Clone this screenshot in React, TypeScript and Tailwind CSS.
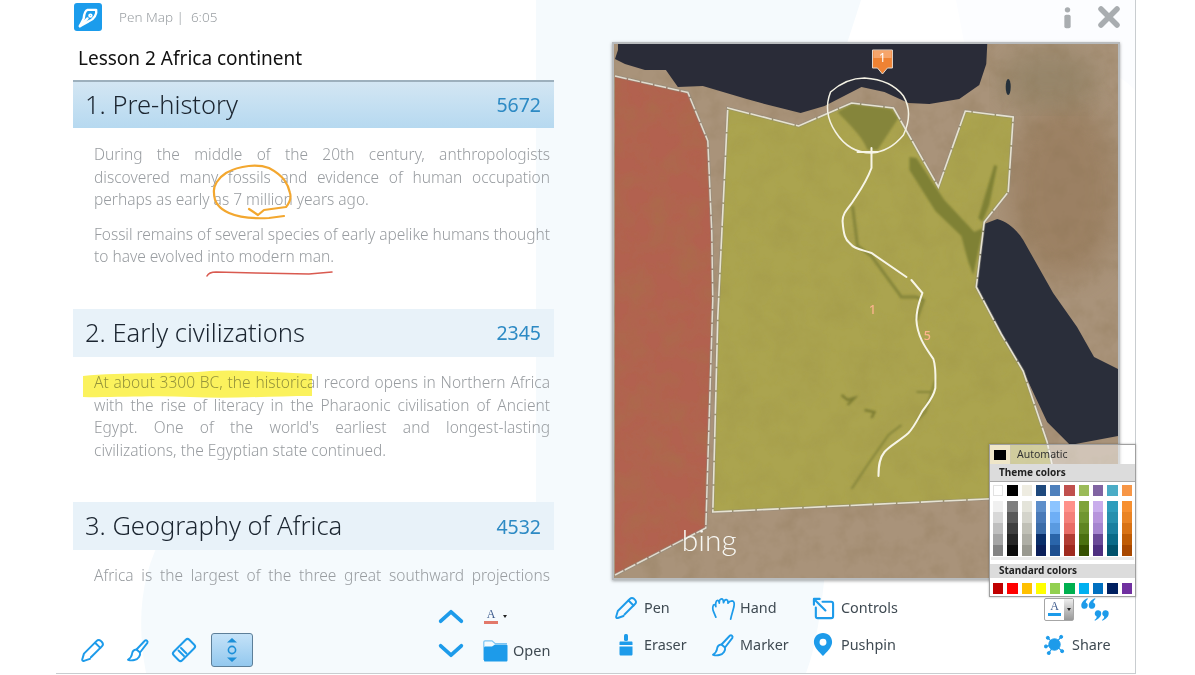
import React from "react";

const BLUE = "#1d9bea";

function Line({ children, last }: { children: React.ReactNode; last?: boolean }) {
  return <div className={last ? "h-[22.6px] leading-[22.6px] whitespace-nowrap" : "h-[22.6px] leading-[22.6px] whitespace-nowrap text-justify [text-align-last:justify]"}>{children}</div>;
}

function SectionHead({ title, num, active }: { title: string; num: string; active?: boolean }) {
  return (
    <div className={active ? "h-[48px] flex items-center justify-between pl-[12px] pr-[13px] border-t-[2px] border-[#9db0bd] bg-gradient-to-b from-[#d3e6f3] to-[#b6d9f0]" : "h-[48px] flex items-center justify-between pl-[12px] pr-[13px] bg-[#e8f2f9]"}>
      <span className="text-[25.5px] font-light text-[#1b2530] leading-[44px] mt-[-2px]">{title}</span>
      <span className="text-[19.5px] text-[#2d8ac4]">{num}</span>
    </div>
  );
}

function PenIcon({ className }: { className: string }) {
  return (
    <svg viewBox="0 0 24 24" className={className} fill="none" stroke={BLUE} strokeWidth="1.9" strokeLinecap="round" strokeLinejoin="round">
      <path d="M9.5 20 L3.8 22 C2.6 22.3 1.9 21.6 2.2 20.4 L3.8 15 L15.8 3 C17 1.8 18.6 1.6 20 2.8 L21 3.8 C22.3 5.2 22.2 6.8 21 8 L10.5 18.5" />
      <path d="M14.5 4.5 L19.5 9.5" />
    </svg>
  );
}

function BrushIcon({ className }: { className: string }) {
  return (
    <svg viewBox="0 0 24 24" className={className} fill="none" stroke={BLUE} strokeWidth="1.9" strokeLinecap="round" strokeLinejoin="round">
      <path d="M19 2.5 C20.3 1.6 22.2 3.2 21.4 4.8 L14 14.5 L10.5 11.5 Z" />
      <path d="M10.5 11.5 C7.5 11.8 6.2 14 6 16 C5.8 18.4 4.4 20 2 21.8 C6 23 11 22.2 13 19 C14.2 17 14.4 15.8 14 14.5" />
    </svg>
  );
}

function Tool({ icon, label, narrow }: { icon: React.ReactNode; label: string; narrow?: boolean }) {
  return (
    <div className="flex items-center h-[36.5px]">
      <div className={narrow ? "w-[29px] flex justify-start" : "w-[30px] flex justify-start"}>{icon}</div>
      <span className="text-[14.4px] text-[#3f4a52]">{label}</span>
    </div>
  );
}

const themeTop = ["bg-[#ffffff] border border-[#e2e2e2]", "bg-[#000000]", "bg-[#eeece1]", "bg-[#1f497d]", "bg-[#4f81bd]", "bg-[#c0504d]", "bg-[#9bbb59]", "bg-[#8064a2]", "bg-[#4bacc6]", "bg-[#f79646]"];
const themeCols = [
  ["bg-[#f0f0f0]", "bg-[#d8d8d8]", "bg-[#bfbfbf]", "bg-[#a5a5a5]", "bg-[#838383]"],
  ["bg-[#7f7f7f]", "bg-[#595959]", "bg-[#3f3f3f]", "bg-[#262626]", "bg-[#0c0c0c]"],
  ["bg-[#e4e4da]", "bg-[#d4d4cb]", "bg-[#c0c0b6]", "bg-[#aeaea5]", "bg-[#999990]"],
  ["bg-[#5e8fca]", "bg-[#4a7ab8]", "bg-[#3c6ca8]", "bg-[#0a2f6b]", "bg-[#0a1f5a]"],
  ["bg-[#8cc4ff]", "bg-[#6eaef5]", "bg-[#5a9ae0]", "bg-[#2a65aa]", "bg-[#1d4f90]"],
  ["bg-[#ff918a]", "bg-[#f4807a]", "bg-[#e86d66]", "bg-[#b23d33]", "bg-[#9f2a1e]"],
  ["bg-[#7fa33c]", "bg-[#6f9630]", "bg-[#5f8522]", "bg-[#4b7010]", "bg-[#355000]"],
  ["bg-[#c9adec]", "bg-[#b795dc]", "bg-[#a585cf]", "bg-[#6a4a98]", "bg-[#4e2f80]"],
  ["bg-[#2e9dbc]", "bg-[#2690ae]", "bg-[#1a7f9f]", "bg-[#0a6a88]", "bg-[#00526c]"],
  ["bg-[#f79030]", "bg-[#ea8424]", "bg-[#d87214]", "bg-[#bf5c05]", "bg-[#a84800]"],
];
const standard = ["bg-[#c00000]", "bg-[#ff0000]", "bg-[#ffc000]", "bg-[#ffff00]", "bg-[#92d050]", "bg-[#00b050]", "bg-[#00b0f0]", "bg-[#0070c0]", "bg-[#002060]", "bg-[#7030a0]"];

function ColorPopup() {
  return (
    <div className="absolute left-[933px] top-[444px] w-[147px] h-[153px] border border-[#a0a0a0] shadow-[0_0_2px_rgba(0,0,0,0.3)] flex flex-col z-20">
      <div className="h-[19px] flex items-center bg-white/45 shrink-0">
        <div className="w-[21px] h-[19px] bg-[#efe6c8] border-r border-[#cfc9a8] flex items-center justify-center">
          <div className="w-[12px] h-[10px] bg-black" />
        </div>
        <span className="ml-[6px] text-[10.5px] text-[#333]">Automatic</span>
      </div>
      <div className="bg-white flex-1 flex flex-col">
        <div className="h-[18px] bg-[#dcdcdc] text-[10px] font-bold text-[#222] pl-[9px] leading-[17px] border-b border-[#aaa]">Theme colors</div>
        <div className="flex gap-[4px] pl-[3px] mt-[3px]">
          {themeTop.map((c, i) => <div key={i} className={`w-[10.3px] h-[11px] ${c}`} />)}
        </div>
        <div className="flex gap-[4px] pl-[3px] mt-[5px]">
          {themeCols.map((col, i) => (
            <div key={i} className="w-[10.3px] flex flex-col">
              {col.map((c, j) => <div key={j} className={`h-[11px] ${c}`} />)}
            </div>
          ))}
        </div>
        <div className="h-[3px] mt-[1px] mx-[1px] bg-[#ececec]" />
        <div className="h-[14px] mt-[4px] bg-[#dcdcdc] text-[10px] font-bold text-[#222] pl-[9px] leading-[12px]">Standard colors</div>
        <div className="flex gap-[4px] pl-[3px] mt-[5px]">
          {standard.map((c, i) => <div key={i} className={`w-[10.3px] h-[11px] ${c}`} />)}
        </div>
      </div>
    </div>
  );
}

function MapDrawing() {
  const egypt = "M728 108 L799 126 L852 103 L894 108 L939 187 L966 111 L1014 117 L1009 192 L985 222 L977 287 L1002 334 L1024 371 L1048 442 L1060 497 L987 499 L713 512 L718 317 Z";
  const libya = "M615 76 L688 92.5 L708 141 L712 233 L713 300 L706 528 L615 575 Z";
  return (
    <svg viewBox="614 44 505 534" className="w-full h-full block" preserveAspectRatio="none">
      <defs>
        <filter id="grain" x="0" y="0" width="100%" height="100%">
          <feTurbulence type="fractalNoise" baseFrequency="0.05" numOctaves="4" seed="7" />
          <feColorMatrix values="0 0 0 0 0.25  0 0 0 0 0.17  0 0 0 0 0.08  0 0 0 0.55 -0.22" />
        </filter>
        <filter id="grainClip" x="0" y="0" width="100%" height="100%">
          <feTurbulence type="fractalNoise" baseFrequency="0.04" numOctaves="4" seed="3" />
          <feColorMatrix values="0 0 0 0 0.3  0 0 0 0 0.25  0 0 0 0 0.05  0 0 0 0.4 -0.14" />
          <feComposite in2="SourceAlpha" operator="in" />
        </filter>
        <filter id="soft"><feGaussianBlur stdDeviation="14" /></filter>
        <filter id="soft2"><feGaussianBlur stdDeviation="1.1" /></filter>
      </defs>
      <rect x="614" y="44" width="505" height="534" fill="#a9937a" />
      <ellipse cx="1065" cy="190" rx="55" ry="90" fill="#96795a" opacity="0.7" filter="url(#soft)" />
      <ellipse cx="1050" cy="80" rx="50" ry="30" fill="#8f8064" opacity="0.7" filter="url(#soft)" />
      <rect x="614" y="44" width="505" height="534" filter="url(#grain)" />
      <path d="M618 44 L618 50 L615 59 L625 64 L645 70 L666 70 L678 87 L703 86 L747 99 L765 104 L801 113 L825 106 L862 87 L885 92 L909 103 L930 104 L960 99 L980 85 L987 64 L988 44 Z" fill="#2a2c38" />
      <path d="M998 219 C1010 222 1020 233 1024 240 L1054 293 L1078 327 L1095 357 L1119 369 L1119 436 L1071 445 L1048 422 L1024 371 L1002 334 L977 287 L985 224 Z" fill="#2a2e3a" />
      <ellipse cx="1009" cy="87" rx="2.5" ry="8" fill="#25303a" />
      {/* Libya */}
      <path d={libya} fill="#b2614f" />
      <path d={libya} fill="#000" filter="url(#grainClip)" />
      <path d="M615 76 L688 92.5 L708 141 L712 233 L713 300 L706 528 L615 575" fill="none" stroke="#8d8c80" strokeWidth="3.2" opacity="0.5" />
      <path d="M615 76 L688 92.5 L708 141 L712 233 L713 300 L706 528 L615 575" fill="none" stroke="#e0dccf" strokeWidth="1.5" strokeDasharray="12 1.5" />
      {/* Egypt */}
      <path d={egypt} fill="#aba44f" />
      <path d={egypt} fill="#000" filter="url(#grainClip)" />
      <path d="M838 112 L852 104 L892 109 L899 118 L878 150 L868 150 C862 135 850 125 838 112 Z" fill="#85853a" filter="url(#soft2)" />
      <path d="M910 157 L917 158 L945 200 L975 232 L984 228 L974 275 L969 262 L962 236 L936 211 L910 170 Z" fill="#7f8136" filter="url(#soft2)" />
      <path d="M995 165 L998 166 L990 205 L983 222 L979 218 Z" fill="#7f8136" filter="url(#soft2)" />
      <path d="M853 206 L858 246 L872 256 L902 297 L917 297 L924 300 L917 320" fill="none" stroke="#85853a" strokeWidth="3" filter="url(#soft2)" />
      <path d="M936 380 L926 412 L918 420 M917 392 L932 392 M902 425 L889 435 L868 465 L852 489" fill="none" stroke="#85853a" strokeWidth="2" filter="url(#soft2)" />
      <path d="M842 395 L848 400 L855 398 L848 405 M865 410 L875 412 L872 418" fill="none" stroke="#7b7b33" strokeWidth="2.4" filter="url(#soft2)" />
      <path d={egypt} fill="none" stroke="#8d8c80" strokeWidth="3.2" opacity="0.45" />
      <path d={egypt} fill="none" stroke="#e6e2d2" strokeWidth="1.6" strokeDasharray="22 1.5" />
      {/* Drawn white ink */}
      <path d="M865 78 C880 79 895 84 904 96 C910 106 912 118 904 135 C895 146 885 152 872 153 C855 153 843 143 836 132 C828 120 825 107 831 92 C840 84 852 78 865 78 Z" fill="none" stroke="#f4f2e4" strokeWidth="1.5" />
      <path d="M858 152 L878 152 M872 148 L872 168 C866 184 858 194 853 202 C847 210 843 214 843 221 C844 235 846 240 850 243 C855 249 860 249 872 253 L907 277" fill="none" stroke="#f7f5e6" strokeWidth="2" strokeLinecap="round" />
      <path d="M912 280 L923 293 C920 302 917 308 917 320 C918 338 928 350 934 359 C937 368 936 380 936 388 C934 398 928 404 923 411 C918 420 914 428 909 433 C900 441 890 446 885 452 C880 458 879 465 879 476" fill="none" stroke="#f7f5e6" strokeWidth="2" strokeLinecap="round" />
      {/* Marker */}
      <path d="M873 50 H893 V68 H888 L883 74 L878 68 H873 Z" fill="#ee8233" stroke="#e6d8cc" strokeWidth="1" />
      <rect x="874" y="51" width="18" height="7" fill="#f6a56b" />
      <text x="883" y="62" textAnchor="middle" fontSize="12" fill="#fff" fontFamily="'Noto Sans', sans-serif">1</text>
      <text x="873" y="314" textAnchor="middle" fontSize="12.5" fontWeight="500" fill="#fbb48c" fontFamily="'Noto Sans', sans-serif">1</text>
      <text x="928" y="340" textAnchor="middle" fontSize="12.5" fontWeight="500" fill="#fbb48c" fontFamily="'Noto Sans', sans-serif">5</text>
      <text x="682" y="551" fontSize="30" fill="#f8f8f4" fontWeight="300" fontFamily="Lato, sans-serif">bing</text>
    </svg>
  );
}

function Backdrop() {
  return (
    <svg viewBox="0 0 1079 673" className="absolute inset-0 w-full h-full pointer-events-none">
      <path d="M545 0 H805 C770 110 740 190 725 260 C790 300 780 600 750 673 H90 C80 620 85 570 110 530 L480 530 L480 0 Z" fill="#f5fafd" />
      <path d="M900 0 H1079 V90 C1030 40 960 70 925 130 Z" fill="#fcfdff" />
    </svg>
  );
}

function InkOverlay() {
  return (
    <svg viewBox="56 0 1079 673" className="absolute inset-0 w-full h-full pointer-events-none z-10">
      <path d="M249 209 L258 215 L264 210 L286 207 Q292 200 290 193 C288 184 284 176 269 168 C258 164 240 165 226 173 C218 178 213 186 214 193 C214 204 222 210 229 213 C238 217 250 219 269 218 L284 216" fill="none" stroke="#f3a72f" strokeWidth="2.2" strokeLinecap="round" strokeLinejoin="round" />
      <path d="M207 276 Q209 272 216 272 L256 273 L309 274 L332 272" fill="none" stroke="#d95a50" strokeWidth="1.6" strokeLinecap="round" />
    </svg>
  );
}

function Highlight() {
  return (
    <svg viewBox="56 0 1079 673" className="absolute inset-0 w-full h-full pointer-events-none mix-blend-multiply">
      <path d="M83 376 C120 372 180 374 210 371 C240 369 280 373 312 374 L312 396 C270 396 230 399 190 397 C150 395 110 398 83 397 Z" fill="#fbf25d" />
    </svg>
  );
}

export default function App() {
  const body = "text-[15.5px] font-light text-[#989ca0] pl-[21px] pr-[4px]";
  return (
    <div className="w-[1195px] h-[675px] bg-white relative overflow-hidden font-['Noto_Sans','Open_Sans',sans-serif]">
      <div className="ml-[56px] w-[1080px] h-[674px] border-r border-b border-[#c9cdd0] relative flex flex-col">
        <Backdrop />
        {/* Title strip */}
        <div className="relative h-[34px] flex items-center justify-between pl-[18px] pr-[15px] shrink-0">
          <div className="flex items-center">
            <div className="w-[28px] h-[28px] rounded-[3px] bg-[#1b9cec] flex items-center justify-center">
              <svg viewBox="0 0 24 24" className="w-[23px] h-[23px]" fill="none" stroke="#fff" strokeWidth="2.5" strokeLinejoin="round" strokeLinecap="round">
                <path d="M3 21 L7 13 C7.5 8 9 4.5 11 4 L20 4 C21 8 18 14 12 16 Z" />
                <path d="M3 21 L11 13" />
                <circle cx="14" cy="10" r="1.4" strokeWidth="1.8" />
              </svg>
            </div>
            <span className="ml-[17px] text-[13.5px] text-[#9a9fa3] font-light whitespace-pre">Pen Map |  6:05</span>
          </div>
          <div className="flex items-center gap-[26px]">
            <svg viewBox="0 0 10 24" className="w-[9px] h-[23px]" fill="#a9adb0">
              <circle cx="5" cy="3.5" r="3" />
              <rect x="1.5" y="9" width="7" height="15" rx="2" />
            </svg>
            <svg viewBox="0 0 22 22" className="w-[22px] h-[22px]" fill="none" stroke="#a9adb0" strokeWidth="5.5" strokeLinecap="round">
              <path d="M3 3 L19 19 M19 3 L3 19" />
            </svg>
          </div>
        </div>

        <div className="relative flex-1 flex pl-[17px]">
          {/* Lesson column */}
          <div className="w-[481px] flex flex-col">
            <div className="h-[46px] flex items-center pl-[5px] pt-[2px] text-[19px] text-[#111]">Lesson 2 Africa continent</div>
            <SectionHead title="1. Pre-history" num="5672" active />
            <div className={`${body} pt-[15px]`}>
              <Line>During the middle of the 20th century, anthropologists</Line>
              <Line>discovered many fossils and evidence of human occupation</Line>
              <Line last>perhaps as early as 7 million years ago.</Line>
              <div className="h-[12px]" />
              <Line><span className="tracking-[-0.04px]">Fossil remains of several species of early apelike humans thought</span></Line>
              <Line last>to have evolved into modern man.</Line>
            </div>
            <div className="h-[41px]" />
            <SectionHead title="2. Early civilizations" num="2345" />
            <div className={`${body} pt-[14px]`}>
              <Line>At about 3300 BC, the historical record opens in Northern Africa</Line>
              <Line>with the rise of literacy in the Pharaonic civilisation of Ancient</Line>
              <Line>Egypt. One of the world's earliest and longest-lasting</Line>
              <Line last>civilizations, the Egyptian state continued.</Line>
            </div>
            <div className="h-[41px]" />
            <SectionHead title="3. Geography of Africa" num="4532" />
            <div className={`${body} pt-[14px]`}>
              <Line>Africa is the largest of the three great southward projections</Line>
            </div>
            {/* Lesson tools */}
            <div className="mt-auto flex items-end h-[74px] pb-[6px]">
              <div className="flex items-center h-[34px] pl-[7px]">
                <PenIcon className="w-[25px] h-[25px]" />
                <BrushIcon className="w-[24px] h-[24px] ml-[21px]" />
                <svg viewBox="0 0 28 28" className="w-[28px] h-[28px] ml-[20px]" fill="none" stroke={BLUE} strokeWidth="2" strokeLinejoin="round">
                  <rect x="3" y="8" width="22" height="12" rx="2.5" transform="rotate(-45 14 14)" />
                  <path d="M8.5 14.5 L14 20 M11 12 L16.5 17.5" strokeLinecap="round" />
                </svg>
                <div className="w-[42px] h-[34px] ml-[13px] rounded-[3px] border border-[#5d7f99] bg-gradient-to-b from-[#c4e2f8] to-[#93c8ee] flex items-center justify-center">
                  <svg viewBox="0 0 14 26" className="w-[14px] h-[26px]">
                    <path d="M7 1 L12 5.5 H2 Z M7 25 L12 20.5 H2 Z" fill="#1c8fd8" />
                    <circle cx="7" cy="13" r="3.6" fill="none" stroke="#1c8fd8" strokeWidth="1.6" />
                  </svg>
                </div>
              </div>
              <div className="flex flex-col items-center w-[30px] ml-[183px] gap-[19px] mb-[9px]">
                <svg viewBox="0 0 28 16" className="w-[28px] h-[15px]" fill="none" stroke={BLUE} strokeWidth="4" strokeLinecap="round" strokeLinejoin="round"><path d="M3 13 L14 3 L25 13" /></svg>
                <svg viewBox="0 0 28 16" className="w-[28px] h-[15px]" fill="none" stroke={BLUE} strokeWidth="4" strokeLinecap="round" strokeLinejoin="round"><path d="M3 3 L14 13 L25 3" /></svg>
              </div>
              <div className="flex flex-col ml-[17px] gap-[13px] mb-[4px]">
                <div className="flex items-center h-[20px] relative">
                  <div className="w-[16px] flex flex-col items-center">
                    <span className="font-['Liberation_Serif',serif] text-[12px] leading-[12px] text-[#3d5a8c]">A</span>
                    <div className="w-[14px] h-[3px] bg-[#e2786a] mt-[1px]" />
                  </div>
                  <span className="ml-[4px] w-0 h-0 border-l-[2.5px] border-r-[2.5px] border-t-[3px] border-l-transparent border-r-transparent border-t-[#222]" />
                </div>
                <div className="flex items-center h-[24px]">
                  <svg viewBox="0 0 25 22" className="w-[25px] h-[22px]">
                    <path d="M0.8 20 V2 C0.8 1.3 1.3 0.8 2 0.8 H9 L12 3.5 H24" fill="none" stroke="#7cc4f2" strokeWidth="1.2" />
                    <path d="M2 21.5 C1.3 21.5 1 21 1 20 V8 C1 7 1.5 6.5 2.5 6.5 H9 L12 4.5 H23 C24 4.5 24.5 5 24.5 6 V20 C24.5 21 24 21.5 23 21.5 Z" fill="#1d9bea" />
                  </svg>
                  <span className="ml-[5px] text-[14.5px] text-[#3f4a52]">Open</span>
                </div>
              </div>
            </div>
          </div>

          {/* Map column */}
          <div className="ml-[58px] w-[508px] flex flex-col pt-[8px]">
            <div className="w-[508px] h-[538px] border-2 border-[#b9bcbe] shadow-[0_1px_3px_rgba(0,0,0,0.35)] bg-[#a58d6e] shrink-0">
              <MapDrawing />
            </div>
            <div className="flex mt-[10px] pl-[2px]">
              <div className="flex flex-col w-[97px]">
                <Tool label="Pen" icon={<PenIcon className="w-[24px] h-[24px]" />} />
                <Tool label="Eraser" icon={
                  <svg viewBox="0 0 14 22" className="w-[14px] h-[22px] ml-[5px]" fill={BLUE}>
                    <rect x="5" y="0" width="4" height="7" rx="1.5" />
                    <path d="M1.5 7.5 H12.5 C13.2 7.5 13.5 8 13.5 8.8 V11 H0.5 V8.8 C0.5 8 0.8 7.5 1.5 7.5 Z" />
                    <path d="M0.5 12.5 H13.5 V20 C13.5 21 13 21.5 12 21.5 H2 C1 21.5 0.5 21 0.5 20 Z" />
                  </svg>} />
              </div>
              <div className="flex flex-col w-[101px]">
                <Tool narrow label="Hand" icon={
                  <svg viewBox="0 0 26 24" className="w-[25px] h-[23px]" fill="none" stroke={BLUE} strokeWidth="1.8" strokeLinecap="round" strokeLinejoin="round">
                    <path d="M5 21 L2.5 15 C1.2 12 2 8 3.2 8 C4.4 8 4.8 9 5 10 C4.6 7 5 3.5 6.8 3.5 C8 3.5 8.4 5 8.6 6.5 C8.6 3.5 9.5 2 11 2 C12.4 2 13 3.5 13 6 C13.5 4 14.5 2.5 16 2.7 C17.5 3 17.8 5 17.6 6.5 C18.6 4.8 20 4 22 4 C24.3 4.2 24.5 7 23.8 10.5 C23 14 21.5 18 20.5 23" />
                  </svg>} />
                <Tool narrow label="Marker" icon={<BrushIcon className="w-[24px] h-[24px]" />} />
              </div>
              <div className="flex flex-col w-[232px]">
                <Tool narrow label="Controls" icon={
                  <svg viewBox="0 0 24 24" className="w-[23px] h-[23px]" fill="none" stroke={BLUE} strokeWidth="2.2" strokeLinecap="round" strokeLinejoin="round">
                    <path d="M11 5 H20 C21.2 5 22 5.8 22 7 V20 C22 21.2 21.2 22 20 22 H6 C4.8 22 4 21.2 4 20 V11" />
                    <path d="M2 8 V2 H8 M2 2 L14 14" />
                  </svg>} />
                <Tool narrow label="Pushpin" icon={
                  <svg viewBox="0 0 20 24" className="w-[20px] h-[23px] ml-[1px]">
                    <path fillRule="evenodd" d="M10 0 C15.5 0 19.5 4 19.5 9.5 C19.5 15 14 20 10 24 C6 20 0.5 15 0.5 9.5 C0.5 4 4.5 0 10 0 Z M10 6 A3.6 3.6 0 1 0 10 13.2 A3.6 3.6 0 1 0 10 6 Z" fill={BLUE} />
                  </svg>} />
              </div>
              <div className="flex flex-col">
                <div className="h-[36.5px] flex items-start">
                  <div className="w-[30px] h-[23px] mt-[8px] flex border border-[#a6a6a6] rounded-[2px] bg-white">
                    <div className="w-[19px] flex flex-col items-center pt-[1px]">
                      <span className="font-['Liberation_Serif',serif] text-[12px] leading-[12px] text-[#3d5a8c]">A</span>
                      <div className="w-[13px] h-[3px] bg-[#1d9bea] mt-[1px]" />
                    </div>
                    <div className="flex-1 bg-gradient-to-b from-[#eee] to-[#999] flex items-center justify-center">
                      <span className="w-0 h-0 border-l-[2.5px] border-r-[2.5px] border-t-[3px] border-l-transparent border-r-transparent border-t-[#222]" />
                    </div>
                  </div>
                  <svg viewBox="0 0 28 23" className="w-[28px] h-[23px] ml-[7px] mt-[8px]" fill={BLUE}>
                    <path id="q" d="M6.5 0.3 C3 1.8 0.3 4.4 0.3 7.4 A3.2 3.2 0 1 0 4.8 4.6 C4.8 3.4 5.6 2 7 1 Z" />
                    <path d="M14 0.3 C10.5 1.8 7.8 4.4 7.8 7.4 A3.2 3.2 0 1 0 12.3 4.6 C12.3 3.4 13.1 2 14.5 1 Z" />
                    <path d="M21.5 22.7 C25 21.2 27.7 18.6 27.7 15.6 A3.2 3.2 0 1 0 23.2 18.4 C23.2 19.6 22.4 21 21 22 Z" />
                    <path d="M14 22.7 C17.5 21.2 20.2 18.6 20.2 15.6 A3.2 3.2 0 1 0 15.7 18.4 C15.7 19.6 14.9 21 13.5 22 Z" />
                  </svg>
                </div>
                <div className="h-[36.5px] flex items-center">
                  <svg viewBox="0 0 22 22" className="w-[21px] h-[21px]" fill={BLUE} stroke={BLUE}>
                    <path d="M11 11 L4 4 M11 11 L18 3 M11 11 L2 13 M11 11 L5 20 M11 11 L19 18" strokeWidth="1.2" />
                    <circle cx="11" cy="11" r="6" />
                    <circle cx="4" cy="4" r="1.6" />
                    <circle cx="18" cy="3" r="1.6" />
                    <circle cx="2" cy="13" r="1.6" />
                    <circle cx="5" cy="20" r="1.6" />
                    <circle cx="19" cy="18" r="1.6" />
                  </svg>
                  <span className="ml-[7px] text-[14.4px] text-[#3f4a52]">Share</span>
                </div>
              </div>
            </div>
          </div>
        </div>
        <Highlight />
        <InkOverlay />
        <ColorPopup />
      </div>
    </div>
  );
}
